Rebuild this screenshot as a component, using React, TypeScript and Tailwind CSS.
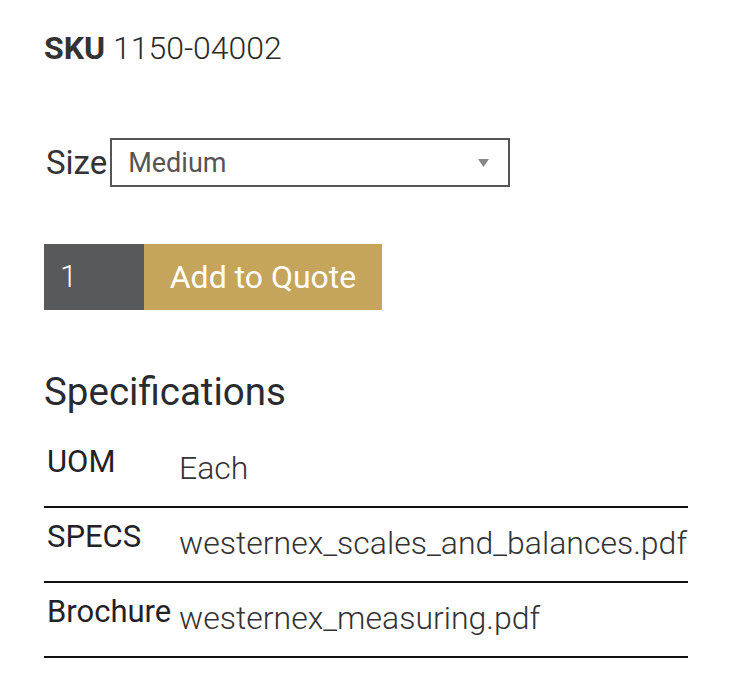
const specs = [
  { label: 'UOM', value: 'Each' },
  { label: 'SPECS', value: 'westernex_scales_and_balances.pdf' },
  { label: 'Brochure', value: 'westernex_measuring.pdf' },
];

export default function App() {
  return (
    <div className="min-h-[694px] bg-white pl-[44px] pt-[30px] font-['Roboto',sans-serif] text-[#333]">
      <p className="text-[32px] leading-[36px] font-light text-[#2b2b2b]">
        <span className="font-bold text-[#333]">SKU</span> 1150-04002
      </p>

      <div className="mt-[72px] flex items-center pl-[2px]">
        <span className="text-[33px] leading-[40px] text-[#333]">Size</span>
        <div className="ml-[3px] flex h-[49px] w-[400px] items-center justify-between border-2 border-[#555] pl-[16px] pr-[19px]">
          <span className="text-[27px] leading-[30px] text-[#555]">Medium</span>
          <svg width="11" height="8" viewBox="0 0 11 8">
            <polygon points="0,0 11,0 5.5,8" fill="#888" />
          </svg>
        </div>
      </div>

      <div className="mt-[57px] flex h-[66px]">
        <div className="flex w-[100px] items-center bg-[#58595b] pl-[16px] text-[31px] font-light text-white">
          1
        </div>
        <button className="flex w-[238px] items-center justify-center bg-[#c5a55c] text-[32px] text-white">
          Add to Quote
        </button>
      </div>

      <h2 className="mt-[60px] text-[38.5px] leading-[44px] text-[#282b30]">Specifications</h2>

      <div className="mt-[19px] w-[644px]">
        {specs.map((row) => (
          <div key={row.label} className="flex h-[75px] border-b-2 border-[#111]">
            <div className="w-[135px] shrink-0 pl-[3px] pt-[11px] text-[31px] leading-[36px] text-[#1f2227]">
              {row.label}
            </div>
            <div className="pt-[17px] text-[32px] font-light leading-[36px] text-[#333]">{row.value}</div>
          </div>
        ))}
      </div>
    </div>
  );
}
